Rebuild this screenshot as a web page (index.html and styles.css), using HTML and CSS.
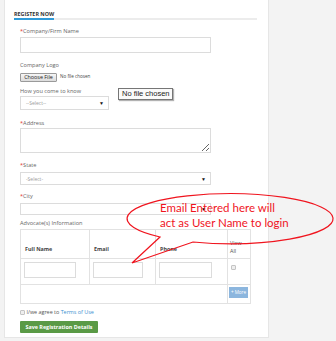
FILE: index.html
```html
<!DOCTYPE html>
<html lang="en">
<head>
    <meta charset="UTF-8">
    <meta name="viewport" content="width=device-width, initial-scale=1.0">
    <title>Register Now</title>
    <link rel="stylesheet" href="styles.css">
</head>
<body>
    <div class="panel">
        <div class="title"><span>Register Now</span></div>
        <form class="form">
            <label class="lbl mt7"><i>*</i>Company/Firm Name</label>
            <input type="text" class="field h16 mt2">

            <label class="lbl mt8">Company Logo</label>
            <div class="file-row mt4">
                <span class="file-btn">Choose File</span>
                <span class="file-txt">No file chosen</span>
            </div>

            <label class="lbl mt5">How you come to know</label>
            <div class="select short h14 mt1"><span>--Select--</span><b>&#9660;</b></div>

            <label class="lbl mt9"><i>*</i>Address</label>
            <textarea class="field area mt1"></textarea>

            <label class="lbl mt8"><i>*</i>State</label>
            <div class="select h13 mt3"><span>-Select-</span><b>&#9660;</b></div>

            <label class="lbl mt7"><i>*</i>City</label>
            <div class="select h12 mt3"><span></span><b>&#9660;</b></div>

            <label class="lbl mt4">Advocate(s) Information</label>
            <table class="adv mt2">
                <colgroup>
                    <col style="width:69px">
                    <col style="width:66px">
                    <col style="width:72px">
                    <col style="width:23px">
                </colgroup>
                <tr class="head">
                    <th>Full Name</th>
                    <th>Email</th>
                    <th>Phone</th>
                    <th class="viewall">View All</th>
                </tr>
                <tr class="row">
                    <td><input type="text" class="cell-in w52"></td>
                    <td><input type="text" class="cell-in w50"></td>
                    <td><input type="text" class="cell-in w53"></td>
                    <td><input type="checkbox" class="chk"></td>
                </tr>
                <tr class="foot">
                    <td colspan="3"></td>
                    <td><span class="more">+ More</span></td>
                </tr>
            </table>

            <div class="agree mt4"><input type="checkbox" class="chk"> I/we agree to <a href="#">Terms of Use</a></div>
            <button type="button" class="save mt5">Save Registration Details</button>
        </form>
        <div class="tooltip">No file chosen</div>
    </div>

    <div class="callout">
        <svg width="336" height="341" viewBox="0 0 336 341">
            <path d="M193,242 A103,25 0 1 0 160,237 L132,263 Z" fill="none" stroke="#f0141e" stroke-width="1.2"/>
        </svg>
        <p>Email Entered here will<br>act as User Name to login</p>
    </div>
</body>
</html>
```

FILE: styles.css
```css
body {
    margin: 0;
    background: #f3f3f3;
    font-family: "Open Sans", "Liberation Sans", sans-serif;
    position: relative;
}
.panel {
    position: relative;
    width: 265px;
    height: 338px;
    margin-left: 4px;
    box-sizing: border-box;
    background: #fff;
    border: 1px solid #e6e6e6;
    border-top: none;
    padding: 10px 11px 0 9px;
}
.title {
    height: 8px;
    border-bottom: 2px solid #ececec;
    font-size: 5.4px;
    font-weight: 700;
    line-height: 8px;
    color: #333;
    text-transform: uppercase;
}
.title span {
    display: inline-block;
    height: 8px;
    border-bottom: 2px solid #2e9ad8;
}
.form {
    display: flex;
    flex-direction: column;
    align-items: flex-start;
    padding-left: 6px;
}
.lbl {
    display: block;
    font-size: 5.6px;
    line-height: 8px;
    color: #666;
}
.lbl i {
    font-style: normal;
    color: #e3342f;
}
.field {
    width: 191px;
    box-sizing: border-box;
    border: 1px solid #dcdcdc;
    margin-bottom: 0;
    padding: 0;
    font-family: inherit;
}
.h16 { height: 16px; }
.h14 { height: 14px; }
.h13 { height: 13px; }
.h12 { height: 12px; }
.area {
    height: 25px;
    margin-bottom: 0;
    display: block;
}
.mt1 { margin-top: 1px; }
.mt2 { margin-top: 2px; }
.mt3 { margin-top: 3px; }
.mt4 { margin-top: 4px; }
.mt5 { margin-top: 5px; }
.mt7 { margin-top: 7px; }
.mt8 { margin-top: 8px; }
.mt9 { margin-top: 9px; }

.file-row {
    display: flex;
    align-items: flex-start;
    height: 9px;
}
.file-btn {
    height: 9px;
    width: 37px;
    box-sizing: border-box;
    border: 1px solid #9a9a9a;
    border-radius: 1px;
    background: linear-gradient(#f6f6f6, #dcdcdc);
    font-size: 5.4px;
    line-height: 7px;
    text-align: center;
    color: #222;
}
.file-txt {
    margin-left: 3px;
    font-size: 4.6px;
    line-height: 6px;
    color: #444;
}

.select {
    position: relative;
    width: 191px;
    box-sizing: border-box;
    border: 1px solid #dcdcdc;
    display: flex;
    align-items: center;
    justify-content: space-between;
    padding: 0 4px 0 5px;
    font-size: 5px;
    color: #999;
}
.select.short {
    width: 89px;
}
.select b {
    font-size: 5px;
    color: #111;
}

.adv {
    width: 230px;
    table-layout: fixed;
    border-collapse: collapse;
    border: 1px solid #e2e2e2;
}
.adv th, .adv td {
    border: 1px solid #e2e2e2;
    padding: 0;
}
.adv th {
    height: 23px;
    vertical-align: bottom;
    text-align: left;
    padding: 0 3px 5px 4px;
    font-size: 5.4px;
    line-height: 8px;
    font-weight: 700;
    color: #444;
}
.adv th.viewall {
    font-weight: 400;
    padding: 0 2px 3px 2px;
    color: #555;
}
.row td {
    height: 26px;
    vertical-align: top;
    padding: 3px 0 0 3px;
    box-sizing: border-box;
    line-height: 0;
}
.cell-in {
    display: block;
    height: 16px;
    box-sizing: border-box;
    border: 1px solid #dcdcdc;
    margin: 0;
    padding: 0;
}
.w52 { width: 52px; }
.w50 { width: 50px; }
.w53 { width: 53px; }
.row td .chk {
    display: block;
    margin: 3px 0 0 0;
}
.chk {
    appearance: none;
    width: 5px;
    height: 5px;
    margin: 0;
    border: 1px solid #c4c4c4;
    border-radius: 1px;
    background: #eee;
    box-sizing: border-box;
    vertical-align: middle;
}
.foot td {
    height: 19px;
    vertical-align: top;
    padding: 2px 0 0 1px;
    box-sizing: border-box;
}
.more {
    display: block;
    width: 19px;
    height: 11px;
    background: #8cb6de;
    color: #fff;
    font-size: 4.6px;
    line-height: 11px;
    text-align: center;
}

.agree {
    font-size: 5.4px;
    line-height: 8px;
    color: #555;
}
.agree a {
    color: #3b8fd0;
    text-decoration: none;
}
.save {
    width: 78px;
    height: 12px;
    padding: 0;
    border: none;
    border-radius: 1px;
    background: #5a9a46;
    color: #fff;
    font-family: inherit;
    font-size: 5.4px;
    font-weight: 700;
}

.tooltip {
    position: absolute;
    left: 113px;
    top: 88px;
    width: 55px;
    height: 12px;
    box-sizing: border-box;
    border: 1px solid #767676;
    background: #fafafa;
    box-shadow: 1px 1px 1px rgba(0, 0, 0, 0.3);
    font-family: "Liberation Sans", sans-serif;
    font-size: 7.5px;
    line-height: 10px;
    padding-left: 3px;
    color: #222;
}

/* annotation drawn over the form */
.callout {
    position: absolute;
    left: 0;
    top: 0;
    width: 336px;
    height: 341px;
    pointer-events: none;
}
.callout svg {
    display: block;
}
.callout p {
    position: absolute;
    left: 160px;
    top: 200px;
    margin: 0;
    font-family: Lato, "Liberation Sans", sans-serif;
    font-size: 11.5px;
    line-height: 15px;
    color: #f0141e;
}
```
